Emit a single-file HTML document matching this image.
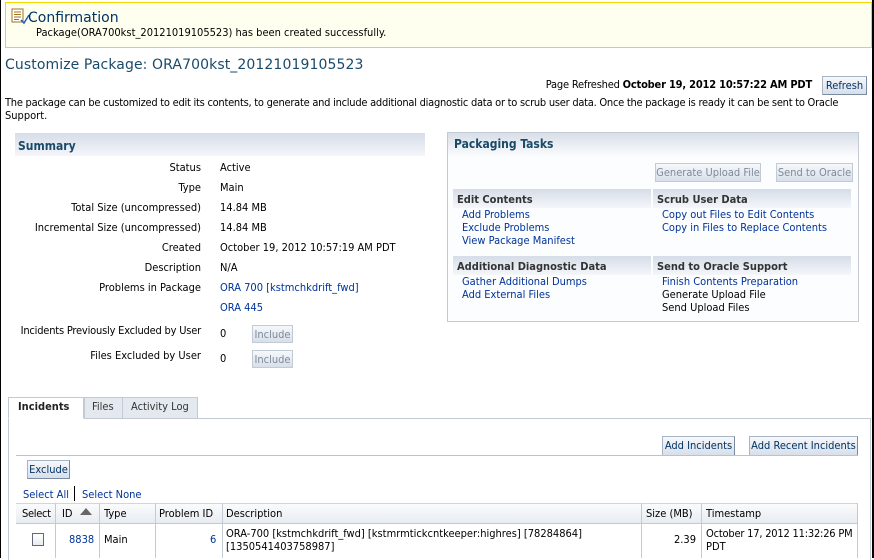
<!DOCTYPE html>
<html><head><meta charset="utf-8"><style>
*{margin:0;padding:0;box-sizing:border-box}
body{width:874px;height:558px;overflow:hidden;background:#fff;font-family:"DejaVu Sans Condensed","Liberation Sans",sans-serif;font-size:11px;color:#000;position:relative}
.a{position:absolute;white-space:nowrap;line-height:14px}
.l{color:#003399}
.btn{position:absolute;border:1px solid #a8b4c4;border-right-color:#7a8aa0;border-bottom-color:#7a8aa0;background:linear-gradient(#f6f8fb,#d8dfe9);text-align:center;line-height:17px;font-size:11px;color:#003366}
.dis{color:#7e8a99;border-color:#c2cad6}
.hdr{position:absolute;background:linear-gradient(#d6dde8,#f4f6fa);}
.r{text-align:right}
.h{font-weight:bold;color:#333}
</style></head><body>
<div style="position:absolute;left:0;top:0;width:874px;height:558px;border-left:1px solid #000;border-right:2px solid #000"></div>
<div style="position:absolute;left:5px;top:2px;width:867px;height:46px;background:#fffff0;border:1px solid #f0d800"></div>
<svg style="position:absolute;left:11px;top:8px" width="20" height="18"><rect x="1" y="1" width="11" height="13" fill="#fff" stroke="#a07020"/><path d="M3 4h7M3 6.5h7M3 9h7M3 11.5h5" stroke="#a07020"/><path d="M10 12l3 3 5-8" stroke="#2060b0" stroke-width="1.5" fill="none"/></svg>
<div class="a" style="left:28px;top:9px;font-size:14px;line-height:18px;color:#003366;font-family:'DejaVu Sans',sans-serif">Confirmation</div>
<div class="a" style="left:36px;top:26px">Package(ORA700kst_20121019105523) has been created successfully.</div>
<div class="a" style="left:5px;top:56px;font-size:14px;line-height:18px;color:#1a4a6a;font-family:'DejaVu Sans',sans-serif;letter-spacing:0.1px">Customize Package: ORA700kst_20121019105523</div>
<div class="a r" style="right:62px;top:78px;letter-spacing:-0.2px">Page Refreshed <b>October 19, 2012 10:57:22 AM PDT</b></div>
<div class="btn" style="left:822px;top:76px;width:45px;height:19px">Refresh</div>
<div class="a" style="left:5px;top:96px;letter-spacing:-0.25px">The package can be customized to edit its contents, to generate and include additional diagnostic data or to scrub user data. Once the package is ready it can be sent to Oracle</div>
<div class="a" style="left:5px;top:109px">Support.</div>

<div class="hdr" style="left:15px;top:133px;width:410px;height:23px"></div>
<div class="a" style="left:18px;top:139px;font-weight:bold;font-size:12px;color:#1a4a6a">Summary</div>
<div class="a r" style="left:0;width:201px;top:161px">Status</div><div class="a" style="left:220px;top:161px">Active</div>
<div class="a r" style="left:0;width:201px;top:181px">Type</div><div class="a" style="left:220px;top:181px">Main</div>
<div class="a r" style="left:0;width:201px;top:201px">Total Size (uncompressed)</div><div class="a" style="left:220px;top:201px">14.84 MB</div>
<div class="a r" style="left:0;width:201px;top:221px">Incremental Size (uncompressed)</div><div class="a" style="left:220px;top:221px">14.84 MB</div>
<div class="a r" style="left:0;width:201px;top:241px">Created</div><div class="a" style="left:220px;top:241px">October 19, 2012 10:57:19 AM PDT</div>
<div class="a r" style="left:0;width:201px;top:261px">Description</div><div class="a" style="left:220px;top:261px">N/A</div>
<div class="a r" style="left:0;width:201px;top:281px">Problems in Package</div><div class="a l" style="left:220px;top:281px">ORA 700 [kstmchkdrift_fwd]</div>
<div class="a l" style="left:220px;top:301px">ORA 445</div>
<div class="a r" style="left:0;width:201px;top:324px;letter-spacing:-0.2px">Incidents Previously Excluded by User</div><div class="a" style="left:220px;top:327px">0</div>
<div class="btn dis" style="left:252px;top:325px;width:41px;height:18px">Include</div>
<div class="a r" style="left:0;width:201px;top:349px">Files Excluded by User</div><div class="a" style="left:220px;top:352px">0</div>
<div class="btn dis" style="left:252px;top:350px;width:41px;height:18px">Include</div>

<div style="position:absolute;left:447px;top:132px;width:412px;height:190px;border:1px solid #c4cad4;background:#fcfdfe"></div>
<div class="hdr" style="left:448px;top:133px;width:410px;height:24px;background:linear-gradient(#d8dee8,#fcfdfe)"></div>
<div class="a" style="left:454px;top:137px;font-weight:bold;font-size:12px;color:#1a4a6a">Packaging Tasks</div>
<div class="btn dis" style="left:655px;top:163px;width:106px;height:19px">Generate Upload File</div>
<div class="btn dis" style="left:776px;top:163px;width:77px;height:19px">Send to Oracle</div>
<div class="hdr" style="left:453px;top:189px;width:198px;height:19px"></div>
<div class="hdr" style="left:653px;top:189px;width:198px;height:19px"></div>
<div class="hdr" style="left:453px;top:256px;width:198px;height:19px"></div>
<div class="hdr" style="left:653px;top:256px;width:198px;height:19px"></div>
<div class="a h" style="left:457px;top:193px">Edit Contents</div>
<div class="a h" style="left:657px;top:193px">Scrub User Data</div>
<div class="a l" style="left:462px;top:208px">Add Problems</div>
<div class="a l" style="left:462px;top:221px">Exclude Problems</div>
<div class="a l" style="left:462px;top:234px">View Package Manifest</div>
<div class="a l" style="left:662px;top:208px">Copy out Files to Edit Contents</div>
<div class="a l" style="left:662px;top:221px">Copy in Files to Replace Contents</div>
<div class="a h" style="left:457px;top:260px">Additional Diagnostic Data</div>
<div class="a h" style="left:657px;top:260px">Send to Oracle Support</div>
<div class="a l" style="left:462px;top:275px">Gather Additional Dumps</div>
<div class="a l" style="left:462px;top:288px">Add External Files</div>
<div class="a l" style="left:662px;top:275px">Finish Contents Preparation</div>
<div class="a" style="left:662px;top:288px">Generate Upload File</div>
<div class="a" style="left:662px;top:301px">Send Upload Files</div>

<div style="position:absolute;left:8px;top:418px;width:863px;height:142px;border:1px solid #c4cad4;border-bottom:none"></div>
<div style="position:absolute;left:84px;top:397px;width:39px;height:22px;border:1px solid #c4cad4;background:#e4e9f0"></div>
<div style="position:absolute;left:122px;top:397px;width:76px;height:22px;border:1px solid #c4cad4;background:#e4e9f0"></div>
<div style="position:absolute;left:8px;top:397px;width:76px;height:22px;border:1px solid #c4cad4;border-bottom:1px solid #fff;background:#fff"></div>
<div class="a" style="left:18px;top:400px;font-weight:bold;color:#222">Incidents</div>
<div class="a" style="left:92px;top:400px;color:#333">Files</div>
<div class="a" style="left:131px;top:400px;color:#333">Activity Log</div>
<div class="btn" style="left:662px;top:436px;width:73px;height:20px">Add Incidents</div>
<div class="btn" style="left:749px;top:436px;width:109px;height:20px">Add Recent Incidents</div>
<div style="position:absolute;left:16px;top:455px;width:842px;height:1px;background:#b8c2d0"></div>
<div class="btn" style="left:27px;top:460px;width:43px;height:19px">Exclude</div>
<div class="a l" style="left:23px;top:488px">Select All</div>
<div style="position:absolute;left:74px;top:486px;width:1px;height:15px;background:#000"></div>
<div class="a l" style="left:82px;top:488px">Select None</div>
<div style="position:absolute;left:16px;top:503px;width:842px;height:21px;background:linear-gradient(#fafbfc,#e8ecf1);border-top:1px solid #d0d6de;border-bottom:1px solid #c4cad4"></div>
<div style="position:absolute;left:16px;top:524px;width:842px;height:34px;background:#fff"></div>
<div style="position:absolute;left:55px;top:503px;width:1px;height:55px;background:#c4cad4"></div>
<div style="position:absolute;left:99px;top:503px;width:1px;height:55px;background:#c4cad4"></div>
<div style="position:absolute;left:155px;top:503px;width:1px;height:55px;background:#c4cad4"></div>
<div style="position:absolute;left:222px;top:503px;width:1px;height:55px;background:#c4cad4"></div>
<div style="position:absolute;left:641px;top:503px;width:1px;height:55px;background:#c4cad4"></div>
<div style="position:absolute;left:701px;top:503px;width:1px;height:55px;background:#c4cad4"></div>
<div style="position:absolute;left:857px;top:503px;width:1px;height:55px;background:#c4cad4"></div>
<div class="a" style="left:22px;top:507px;letter-spacing:-0.3px">Select</div>
<div class="a" style="left:62px;top:507px">ID</div>
<svg style="position:absolute;left:80px;top:508px" width="12" height="8"><path d="M0 7L6 0L12 7Z" fill="#666"/></svg>
<div class="a" style="left:104px;top:507px">Type</div>
<div class="a" style="left:159px;top:507px">Problem ID</div>
<div class="a" style="left:226px;top:507px">Description</div>
<div class="a" style="left:646px;top:507px">Size (MB)</div>
<div class="a" style="left:706px;top:507px">Timestamp</div>
<div style="position:absolute;left:32px;top:533px;width:12px;height:13px;border:1px solid #667;background:linear-gradient(#fff,#e8ecf0)"></div>
<div class="a l" style="left:69px;top:533px">8838</div>
<div class="a" style="left:104px;top:533px">Main</div>
<div class="a l" style="left:210px;top:533px">6</div>
<div class="a" style="left:226px;top:527px">ORA-700 [kstmchkdrift_fwd] [kstmrmtickcntkeeper:highres] [78284864]</div>
<div class="a" style="left:226px;top:540px">[1350541403758987]</div>
<div class="a" style="left:674px;top:533px">2.39</div>
<div class="a" style="left:706px;top:527px;letter-spacing:-0.2px">October 17, 2012 11:32:26 PM</div>
<div class="a" style="left:706px;top:540px">PDT</div>
</body></html>
